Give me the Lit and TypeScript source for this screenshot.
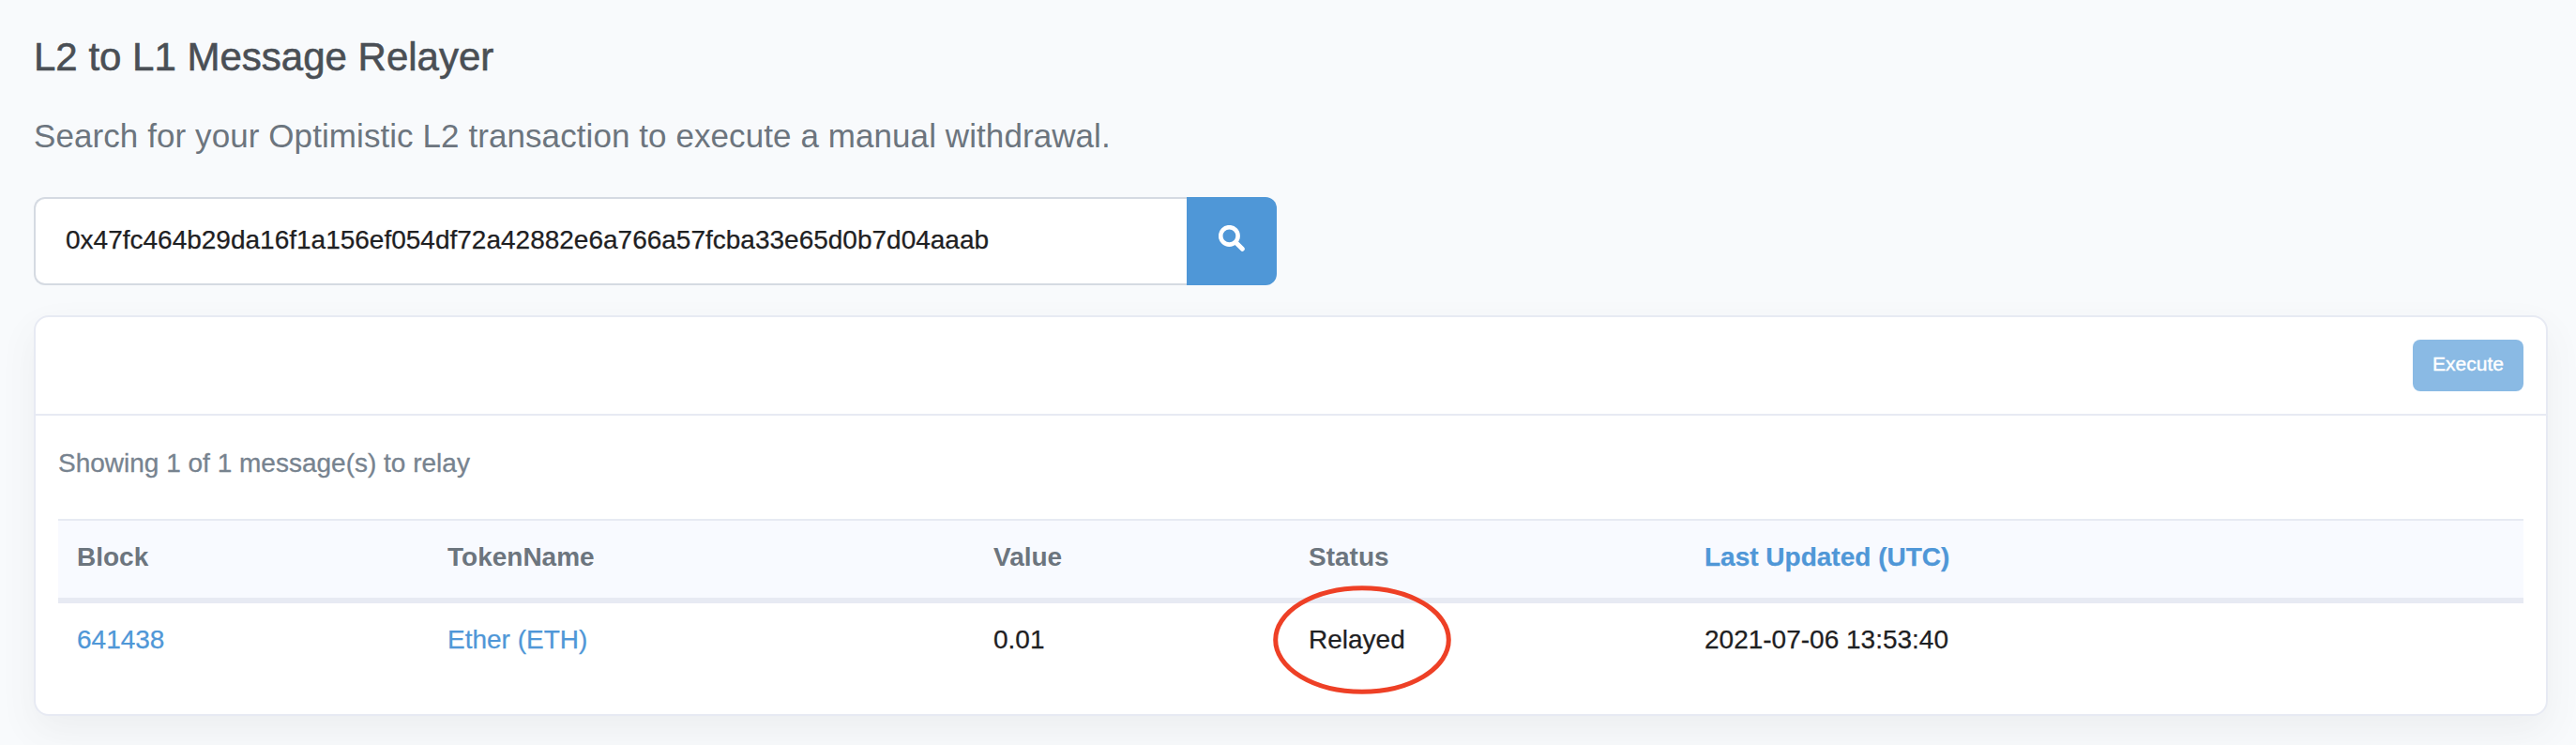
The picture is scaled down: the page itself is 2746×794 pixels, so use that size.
import { LitElement, html, css } from "lit";
import { customElement, state } from "lit/decorators.js";

interface RelayMessage {
  block: string;
  token: string;
  value: string;
  status: string;
  updated: string;
}

@customElement("app-root")
export class AppRoot extends LitElement {
  static styles = css`
    :host {
      display: block;
      box-sizing: border-box;
      height: 794px;
      padding: 36px 30px 0 36px;
      overflow: hidden;
      background: #f8fafc;
      color: #1e2022;
      font-family: "Liberation Sans", Arial, sans-serif;
      font-size: 28px;
      -webkit-text-stroke: 0.25px currentColor;
    }
    * { box-sizing: border-box; }
    a {
      color: #4f97d7;
      text-decoration: none;
      -webkit-text-stroke: 0.25px #4f97d7;
    }
    .title {
      margin: 0;
      height: 82px;
      font-size: 42px;
      font-weight: 400;
      line-height: 50px;
      color: #4a4f55;
      -webkit-text-stroke: 0.6px #4a4f55;
    }
    .lead {
      margin: 0;
      height: 92px;
      font-size: 35px;
      letter-spacing: 0.08px;
      line-height: 54px;
      color: #6c757e;
      -webkit-text-stroke: 0;
    }
    .search {
      display: flex;
      width: 1325px;
      height: 94px;
    }
    .field {
      flex: 1;
      min-width: 0;
      padding: 0 32px 3px;
      border: 2px solid #d5dae2;
      border-right: 0;
      border-radius: 12px 0 0 12px;
      background: #fff;
      color: #1e2022;
      font: inherit;
      outline: none;
    }
    .go {
      width: 96px;
      padding: 0 0 6px;
      display: flex;
      align-items: center;
      justify-content: center;
      border: 0;
      border-radius: 0 12px 12px 0;
      background: #4f97d7;
    }
    .go svg { width: 28px; height: 28px; }
    .card {
      margin-top: 32px;
      width: 2680px;
      height: 427px;
      border: 2px solid #e7eaf3;
      border-radius: 16px;
      background: #fff;
      box-shadow: 0 16px 38px rgba(82, 85, 92, 0.07);
    }
    .head {
      display: flex;
      justify-content: flex-end;
      height: 105px;
      padding: 24px 24px 0 0;
      border-bottom: 2px solid #e7eaf3;
    }
    .execute {
      width: 118px;
      height: 55px;
      padding: 0 0 4px;
      border: 0;
      border-radius: 8px;
      background: #8abae4;
      color: #fff;
      font-family: inherit;
      font-size: 21px;
      -webkit-text-stroke: 0.4px #fff;
    }
    .body { padding: 30px 24px 0; }
    .count {
      margin: 0;
      height: 80px;
      line-height: 42px;
      color: #77838f;
      -webkit-text-stroke: 0.3px #77838f;
    }
    table {
      width: 100%;
      border-collapse: separate;
      border-spacing: 0;
      table-layout: fixed;
    }
    th, td { padding: 0 0 0 20px; text-align: left; }
    th {
      height: 90px;
      padding-bottom: 5px;
      border-top: 2px solid #e7eaf3;
      border-bottom: 6px solid #e7eaf3;
      background: #f8faff;
      color: #6c757e;
      font-weight: 700;
      -webkit-text-stroke: 0;
    }
    td { height: 78px; }
    .c1 { width: 395px; }
    .c2 { width: 582px; }
    .c3 { width: 336px; }
    .c4 { width: 422px; }
    .status { position: relative; display: inline-block; }
    .mark {
      position: absolute;
      left: -38px;
      top: -42px;
      width: 190px;
      height: 116px;
      overflow: visible;
      pointer-events: none;
    }
  `;

  @state() private query = "0x47fc464b29da16f1a156ef054df72a42882e6a766a57fcba33e65d0b7d04aaab";

  @state() private messages: RelayMessage[] = [
    { block: "641438", token: "Ether (ETH)", value: "0.01", status: "Relayed", updated: "2021-07-06 13:53:40" },
  ];

  render() {
    const n = this.messages.length;
    return html`
      <h1 class="title">L2 to L1 Message Relayer</h1>
      <p class="lead">Search for your Optimistic L2 transaction to execute a manual withdrawal.</p>
      <div class="search">
        <input class="field" type="text" spellcheck="false" .value=${this.query} />
        <button class="go" aria-label="Search">
          <svg viewBox="0 0 28 28" fill="none" stroke="#fff">
            <circle cx="11.4" cy="11.4" r="9.2" stroke-width="4.6" />
            <path d="M19 19l6.3 6.3" stroke-width="5" stroke-linecap="round" />
          </svg>
        </button>
      </div>
      <section class="card">
        <header class="head"><button class="execute">Execute</button></header>
        <div class="body">
          <p class="count">Showing ${n} of ${n} message(s) to relay</p>
          <table>
            <thead>
              <tr>
                <th class="c1">Block</th>
                <th class="c2">TokenName</th>
                <th class="c3">Value</th>
                <th class="c4">Status</th>
                <th><a>Last Updated (UTC)</a></th>
              </tr>
            </thead>
            <tbody>
              ${this.messages.map((m) => html`
                <tr>
                  <td><a>${m.block}</a></td>
                  <td><a>${m.token}</a></td>
                  <td>${m.value}</td>
                  <td>
                    <span class="status">${m.status}
                      <svg class="mark" viewBox="0 0 190 116" fill="none">
                        <ellipse cx="95" cy="58" rx="92.3" ry="55.2" stroke="#ee4026" stroke-width="5" />
                      </svg>
                    </span>
                  </td>
                  <td>${m.updated}</td>
                </tr>`)}
            </tbody>
          </table>
        </div>
      </section>
    `;
  }
}
